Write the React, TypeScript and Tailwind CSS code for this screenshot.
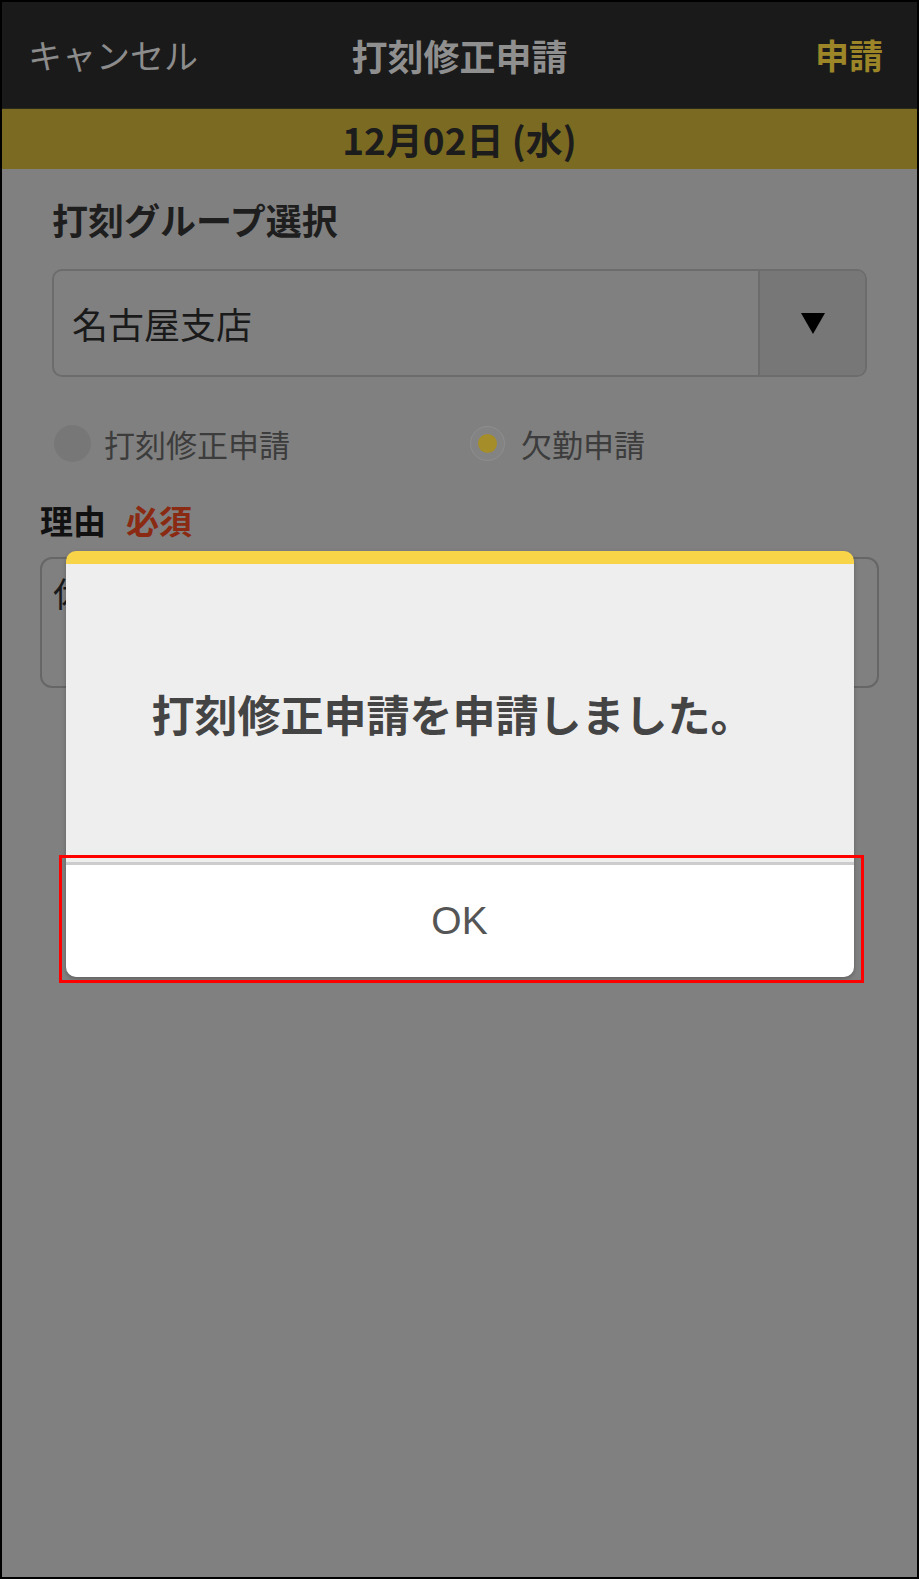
export default function App() {
  return (
    <div className="relative h-[1579px] w-[919px] overflow-hidden border-2 border-black bg-[#808080] font-['Noto_Sans_CJK_JP',sans-serif]">
      {/* Header */}
      <header className="grid h-[106px] grid-cols-[1fr_auto_1fr] items-center bg-[#1a1a1a] px-[26px]">
        <span className="text-[34px] leading-none text-[#8c8c8c]">キャンセル</span>
        <h1 className="text-[36px] font-bold leading-none text-[#8f8f8f]">打刻修正申請</h1>
        <span className="justify-self-end pr-[8px] text-[34px] font-bold leading-none text-[#9c8628]">申請</span>
      </header>

      {/* Date band */}
      <div className="flex h-[61px] items-center justify-center border-t border-[#2a2a1a] bg-[#7b6a21]">
        <span className="text-[37px] font-bold leading-none text-[#1c1c1c]">12月02日 (水)</span>
      </div>

      {/* Form */}
      <div className="px-[50px]">
        <h2 className="mt-[30px] text-[36px] font-bold leading-[40px] text-[#1e1e1e]">打刻グループ選択</h2>

        <div className="mt-[30px] flex h-[108px] overflow-hidden rounded-[10px] border-2 border-[#6c6c6c]">
          <div className="flex flex-1 items-center pl-[18px] text-[36px] text-[#1a1a1a]">名古屋支店</div>
          <div className="flex w-[107px] items-center justify-center border-l-2 border-[#6c6c6c] bg-[#777777]">
            <svg width="26" height="23" viewBox="0 0 26 23">
              <path d="M1 1 H25 L13 22 Z" fill="#000" />
            </svg>
          </div>
        </div>

        <div className="mt-[46px] flex h-[40px] items-center pl-[2px]">
          <label className="flex w-[416px] items-center gap-[13px]">
            <span className="h-[37px] w-[37px] rounded-full bg-[#777777]" />
            <span className="text-[31px] leading-none text-[#3c3c3c]">打刻修正申請</span>
          </label>
          <label className="flex items-center gap-[16px]">
            <span className="flex h-[35px] w-[35px] items-center justify-center rounded-full border-[1.5px] border-[#8e8e8e] bg-[#838383]">
              <span className="h-[19px] w-[19px] rounded-full bg-[#a58e2a]" />
            </span>
            <span className="text-[31px] leading-none text-[#3c3c3c]">欠勤申請</span>
          </label>
        </div>
      </div>

      <div className="px-[38px]">
        <div className="mt-[37px] flex h-[40px] items-center gap-[20px]">
          <span className="text-[33px] font-bold leading-none text-[#111]">理由</span>
          <span className="text-[33px] font-bold leading-none text-[#8b2a12]">必須</span>
        </div>
        <div className="mt-[17px] h-[131px] rounded-[12px] border-2 border-[#666666] px-[11px] pt-[14px] text-[34px] leading-[40px] text-[#1a1a1a]">
          休暇のため
        </div>
      </div>

      {/* Dialog */}
      <div className="absolute inset-0 flex justify-center pt-[549px]">
        <div className="h-[426px] w-[788px] overflow-hidden rounded-[10px] shadow-[0_2px_4px_rgba(0,0,0,0.25)]">
          <div className="h-[13px] bg-[#f8d448]" />
          <div className="flex h-[298px] items-center justify-center bg-[#eeeeee]">
            <p className="pr-[14px] text-[43px] font-bold leading-none text-[#444444]">打刻修正申請を申請しました。</p>
          </div>
          <div className="h-[3px] bg-[#cccccc]" />
          <button className="flex h-[112px] w-full items-center justify-center bg-white font-['Liberation_Sans',sans-serif] text-[39px] text-[#555555]">
            OK
          </button>
        </div>
      </div>

      {/* Highlight */}
      <div className="absolute left-[57px] top-[853px] h-[128px] w-[805px] border-[3px] border-[#ff0000]" />
    </div>
  );
}
